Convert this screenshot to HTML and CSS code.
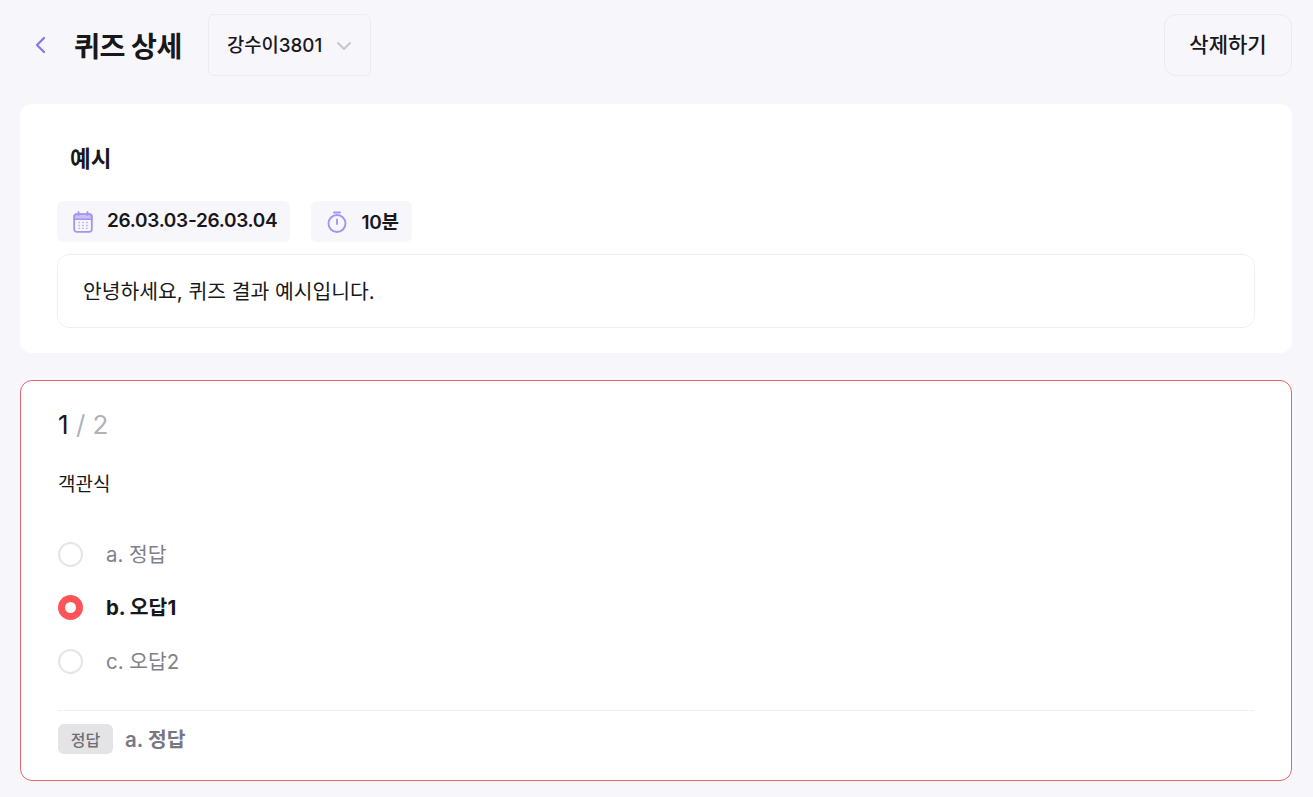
FILE: index.html
```html
<!DOCTYPE html>
<html lang="ko">
<head>
    <meta charset="UTF-8">
    <title>퀴즈 상세</title>
    <link rel="stylesheet" href="styles.css">
</head>
<body>
    <header class="top-bar">
        <div class="top-left">
            <button class="back-btn" aria-label="뒤로">
                <svg width="12" height="18" viewBox="0 0 12 18" fill="none"><path d="M10 2 L3 9 L10 16" stroke="#8b78ea" stroke-width="2.3" stroke-linecap="round" stroke-linejoin="round"/></svg>
            </button>
            <h1 class="page-title">퀴즈 상세</h1>
            <div class="select-box">
                <span>강수이3801</span>
                <svg width="16" height="10" viewBox="0 0 16 10" fill="none"><path d="M2 2 L8 8 L14 2" stroke="#c4c4ca" stroke-width="1.8" stroke-linecap="round" stroke-linejoin="round"/></svg>
            </div>
        </div>
        <button class="delete-btn">삭제하기</button>
    </header>

    <section class="card info-card">
        <h2 class="quiz-name">예시</h2>
        <div class="chips">
            <div class="chip">
                <svg width="20" height="22" viewBox="0 0 20 22" fill="none">
                    <rect x="1.2" y="3.2" width="17.6" height="17.6" rx="2.5" stroke="#a594f0" stroke-width="1.8"/>
                    <path d="M1.2 8.2 H18.8 V5.5 A2.3 2.3 0 0 0 16.5 3.2 H3.5 A2.3 2.3 0 0 0 1.2 5.5 Z" fill="#a594f0" fill-opacity="0.55" stroke="#a594f0" stroke-width="1.4"/>
                    <path d="M5.5 1 V4 M14.5 1 V4" stroke="#a594f0" stroke-width="1.8" stroke-linecap="round"/>
                    <path d="M5.5 11.5 H6.7 M9.4 11.5 H10.6 M13.3 11.5 H14.5 M5.5 14.5 H6.7 M9.4 14.5 H10.6 M13.3 14.5 H14.5 M5.5 17.3 H6.7 M9.4 17.3 H10.6 M13.3 17.3 H14.5" stroke="#a594f0" stroke-width="1.3"/>
                </svg>
                <span>26.03.03-26.03.04</span>
            </div>
            <div class="chip">
                <svg width="20" height="22" viewBox="0 0 20 22" fill="none">
                    <circle cx="10" cy="12.5" r="8.5" stroke="#a594f0" stroke-width="1.9"/>
                    <path d="M7 1.6 H13" stroke="#a594f0" stroke-width="2" stroke-linecap="round"/>
                    <path d="M10 8.5 V13" stroke="#a594f0" stroke-width="1.9" stroke-linecap="round"/>
                </svg>
                <span>10분</span>
            </div>
        </div>
        <div class="desc-box">안녕하세요, 퀴즈 결과 예시입니다.</div>
    </section>

    <section class="card question-card">
        <div class="counter"><span class="current">1</span> / 2</div>
        <div class="question-type">객관식</div>
        <ul class="options">
            <li class="option"><span class="radio"></span>a. 정답</li>
            <li class="option selected"><span class="radio"></span>b. 오답1</li>
            <li class="option"><span class="radio"></span>c. 오답2</li>
        </ul>
        <div class="answer-row">
            <span class="answer-tag">정답</span>
            <span class="answer-text">a. 정답</span>
        </div>
    </section>
</body>
</html>
```

FILE: styles.css
```css
* {
    box-sizing: border-box;
}

body {
    margin: 0;
    padding: 14px 21px 0 20px;
    background-color: #f7f6fb;
    color: #18181b;
    font-family: Inter, "Noto Sans CJK KR", sans-serif;
    height: 797px;
    overflow: hidden;
}

.top-bar {
    display: flex;
    align-items: center;
    justify-content: space-between;
    height: 62px;
}

.top-left {
    display: flex;
    align-items: center;
}

.back-btn {
    display: flex;
    align-items: center;
    width: 40px;
    margin-left: 14px;
    padding: 0;
    border: none;
    background: none;
}

.page-title {
    margin: 0 26px 2px 0;
    font-size: 28.2px;
    font-weight: 700;
    letter-spacing: -0.5px;
}

.select-box {
    display: flex;
    align-items: center;
    justify-content: space-between;
    width: 163px;
    height: 62px;
    padding: 0 18px;
    border: 1px solid #ecebf2;
    border-radius: 6px;
    font-size: 18.8px;
    font-weight: 500;
}

.select-box span {
    margin-bottom: 4px;
}

.select-box svg {
    margin-top: 2px;
}

.delete-btn {
    width: 128px;
    height: 62px;
    padding: 0 0 4px;
    border: 1px solid #ecebf2;
    border-radius: 12px;
    background: none;
    color: #18181b;
    font-family: inherit;
    font-size: 21px;
    font-weight: 500;
}

.card {
    background-color: #fff;
    border-radius: 12px;
}

.info-card {
    height: 248.5px;
    margin-top: 28px;
    padding: 38px 37px 0;
}

.quiz-name {
    margin: 0 0 27px 13px;
    height: 32px;
    line-height: 34px;
    font-size: 22.5px;
    font-weight: 700;
}

.chips {
    display: flex;
    gap: 21px;
}

.chip {
    display: flex;
    align-items: center;
    gap: 14px;
    height: 41px;
    padding: 0 13px 0 16px;
    background-color: #f7f6fb;
    border-radius: 6px;
    font-size: 19px;
    font-weight: 600;
    letter-spacing: -0.3px;
}

.chip span {
    margin-bottom: 2px;
}

.desc-box {
    height: 74px;
    margin-top: 12px;
    padding: 0 25px;
    line-height: 73px;
    border: 1px solid #f0eff4;
    border-radius: 12px;
    font-size: 20.4px;
}

.question-card {
    height: 401px;
    margin-top: 27.5px;
    padding: 24px 37px 0;
    border: 1px solid #e0666a;
}

.counter {
    height: 40px;
    line-height: 40px;
    font-size: 26px;
    color: #b1b1b8;
}

.current {
    color: #18181b;
}

.question-type {
    margin-top: 27px;
    height: 26px;
    line-height: 26px;
    font-size: 19px;
}

.options {
    margin: 29px 0 0;
    padding: 0;
    list-style: none;
}

.option {
    display: flex;
    align-items: center;
    gap: 23px;
    height: 53.5px;
    padding-bottom: 2px;
    font-size: 20.4px;
    color: #80808a;
}

.option.selected {
    color: #18181b;
    font-weight: 700;
}

.radio {
    width: 25px;
    height: 25px;
    margin-top: 3px;
    border: 2px solid #e5e5e7;
    border-radius: 50%;
}

.selected .radio {
    border: 7px solid #ff5457;
}

.answer-row {
    display: flex;
    align-items: center;
    gap: 12px;
    height: 58px;
    margin-top: 22px;
    border-top: 1px solid #f1f1f4;
}

.answer-tag {
    display: flex;
    align-items: center;
    justify-content: center;
    width: 55px;
    height: 30px;
    padding-bottom: 1px;
    background-color: #e4e4e6;
    border-radius: 6px;
    color: #6d6d78;
    font-size: 16px;
    font-weight: 500;
}

.answer-text {
    margin-bottom: 2px;
    color: #777783;
    font-size: 20.4px;
    font-weight: 600;
}
```
